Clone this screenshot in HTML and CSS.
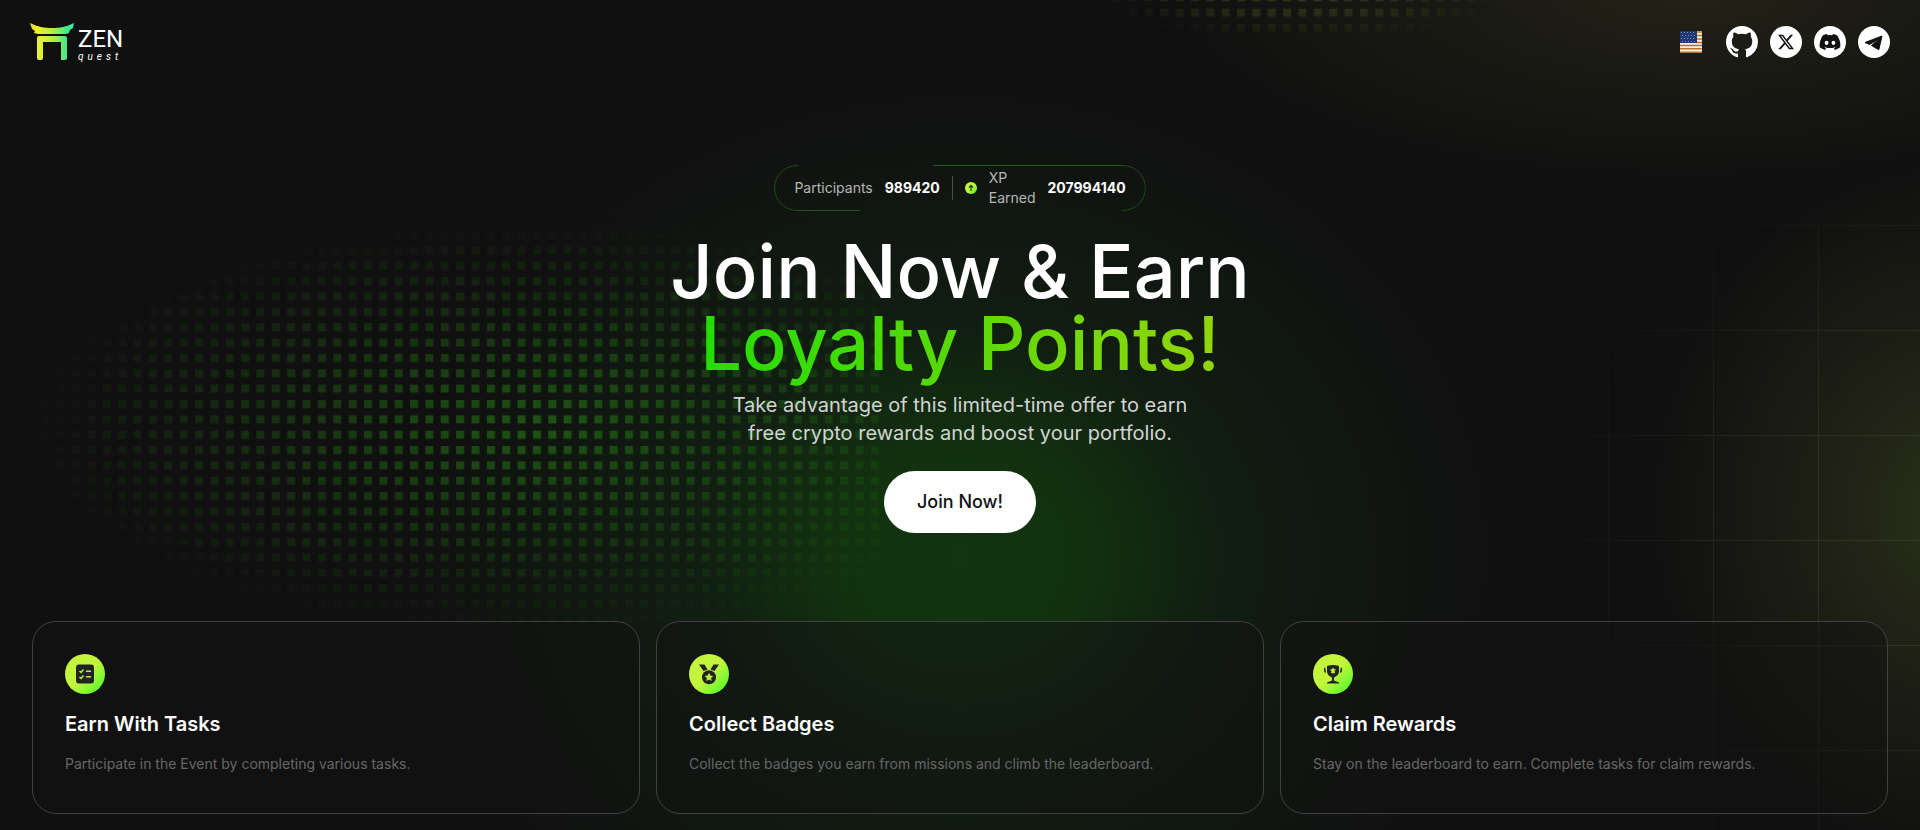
FILE: index.html
```html
<!DOCTYPE html>
<html lang="en">
<head>
<meta charset="utf-8">
<meta name="viewport" content="width=device-width, initial-scale=1">
<title>Zen Quest</title>
<link rel="stylesheet" href="styles.css">
</head>
<body>
<div class="backdrop" aria-hidden="true">
  <div class="glow"></div>
  <div class="grid-lines"></div>
  <svg class="dots-left" width="880" height="440" viewBox="0 0 880 440">
    <defs>
      <pattern id="dotL" width="15.36" height="15.36" patternUnits="userSpaceOnUse" x="10.7" y="0.3"><rect x="0" y="0" width="8" height="8" fill="#236e14"/></pattern>
      <radialGradient id="fadeL" gradientUnits="userSpaceOnUse" cx="0" cy="0" r="1" gradientTransform="translate(540 227) scale(520 210)">
        <stop offset="0" stop-color="#fff" stop-opacity=".72"/><stop offset="1" stop-color="#fff" stop-opacity="0"/>
      </radialGradient>
      <mask id="maskL"><rect width="880" height="440" fill="url(#fadeL)"/></mask>
    </defs>
    <rect width="880" height="440" fill="url(#dotL)" mask="url(#maskL)"/>
  </svg>
  <svg class="dots-top" width="480" height="40" viewBox="0 0 480 40">
    <defs>
      <pattern id="dotT" width="15.36" height="15.36" patternUnits="userSpaceOnUse" x="3.4" y="8.8"><rect x="0" y="0" width="8" height="8" fill="#50551c"/></pattern>
      <radialGradient id="fadeT" gradientUnits="userSpaceOnUse" cx="0" cy="0" r="1" gradientTransform="translate(220 -30) scale(236 72)">
        <stop offset="0" stop-color="#fff" stop-opacity=".9"/><stop offset="1" stop-color="#fff" stop-opacity="0"/>
      </radialGradient>
      <mask id="maskT"><rect width="480" height="40" fill="url(#fadeT)"/></mask>
    </defs>
    <rect width="480" height="40" fill="url(#dotT)" mask="url(#maskT)"/>
  </svg>
</div>

<header class="header">
  <a class="logo" href="#" aria-label="Zen Quest home">
    <svg width="44" height="40" viewBox="0 0 44 40" aria-hidden="true">
      <defs><linearGradient id="torii" x1="0" x2="1" y1="0" y2="0"><stop offset="0" stop-color="#fbd32a"/><stop offset=".15" stop-color="#eef22e"/><stop offset=".5" stop-color="#b9ee3e"/><stop offset=".85" stop-color="#3fe98c"/><stop offset="1" stop-color="#35e6a0"/></linearGradient></defs>
      <path fill="url(#torii)" d="M0 1C8 5 14 6 22 6S36 5 44 1L43 6 40 8 39 11 36 12H8L4 11 5 9 2 7ZM9 14H35Q37 14 37 16V36Q37 38 35 38H31V20H13V36Q13 38 11 38H9Q7 38 7 36V16Q7 14 9 14Z"/>
    </svg>
    <span class="wordmark"><span class="zen">ZEN</span><span class="quest">quest</span></span>
  </a>
  <nav class="links" aria-label="Language and community">
    <button class="flag" type="button" aria-label="English">
      <svg width="22" height="22" viewBox="0 0 22 22" aria-hidden="true">
        <path fill="#f5efe4" d="M0 0H22V22H0Z"/>
        <path stroke="#b5742a" stroke-width="1.500" d="M17 1H22M17 4.500H22M17 8H22M17 11.500H22M0 14.500H22M0 17.800H22M0 21.300H22"/>
        <path fill="#1f3673" d="M0 0H17V12H0Z"/>
        <path stroke="#8296c0" stroke-dasharray="1 2" d="M1 1.500H16M2 4.500H16M1 7.500H16M2 10.500H16"/>
      </svg>
    </button>
    <div class="social">
      <a href="#" aria-label="GitHub"><svg viewBox="0 0 16 16"><path fill="#fff" d="M8 0C3.580 0 0 3.580 0 8c0 3.540 2.290 6.530 5.470 7.590.4.070.55-.17.55-.38 0-.19-.01-.82-.01-1.490-2.010.370-2.530-.49-2.690-.94-.09-.23-.48-.94-.82-1.130-.28-.15-.68-.52-.01-.53.63-.01 1.080.58 1.230.82.72 1.210 1.870.87 2.330.66.070-.52.28-.87.51-1.070-1.780-.2-3.640-.89-3.640-3.950 0-.87.31-1.590.82-2.150-.08-.2-.36-1.020.08-2.120 0 0 .67-.21 2.200.82.64-.18 1.320-.27 2-.27s1.360.09 2 .27c1.530-1.040 2.200-.82 2.200-.82.44 1.100.16 1.920.08 2.120.51.56.82 1.270.82 2.150 0 3.070-1.870 3.750-3.650 3.950.29.25.54.73.54 1.480 0 1.070-.01 1.930-.01 2.200 0 .21.15.46.55.38A8.010 8.010 0 0 0 16 8c0-4.420-3.580-8-8-8"/></svg></a>
      <a href="#" aria-label="X"><svg viewBox="0 0 32 32"><circle cx="16" cy="16" r="16" fill="#fff"/><path fill="#111" transform="translate(8 8)" d="M12.600.75h2.454l-5.360 6.142L16 15.250h-4.937l-3.867-5.070-4.425 5.070H.316l5.733-6.570L0 .75h5.063l3.495 4.633L12.601.75Zm-.86 13.028h1.360L4.323 2.145H2.865z"/></svg></a>
      <a href="#" aria-label="Discord"><svg viewBox="0 0 32 32"><circle cx="16" cy="16" r="16" fill="#fff"/><path fill="#111" transform="translate(5.600 5.600) scale(1.300)" d="M13.545 2.907a13.200 13.200 0 0 0-3.257-1.011.05.05 0 0 0-.052.025c-.141.25-.297.577-.406.833a12.200 12.200 0 0 0-3.658 0 8 8 0 0 0-.412-.833.05.05 0 0 0-.052-.025c-1.125.194-2.220.534-3.257 1.011a.04.04 0 0 0-.021.018C.356 6.024-.213 9.047.066 12.032q.003.022.021.037a13.300 13.300 0 0 0 3.995 2.020.05.05 0 0 0 .056-.019q.463-.63.818-1.329a.05.05 0 0 0-.01-.059l-.018-.011a9 9 0 0 1-1.248-.595.05.05 0 0 1-.02-.066l.015-.019q.127-.095.248-.195a.05.05 0 0 1 .051-.007c2.619 1.196 5.454 1.196 8.041 0a.05.05 0 0 1 .053.007q.121.1.248.195a.05.05 0 0 1-.004.085 8 8 0 0 1-1.249.594.05.05 0 0 0-.03.03.05.05 0 0 0 .003.041c.24.465.515.909.817 1.329a.05.05 0 0 0 .056.019 13.200 13.200 0 0 0 4.001-2.020.05.05 0 0 0 .021-.037c.334-3.451-.559-6.449-2.366-9.106a.03.03 0 0 0-.02-.019m-8.198 7.307c-.789 0-1.438-.724-1.438-1.612s.637-1.613 1.438-1.613c.807 0 1.450.73 1.438 1.613 0 .888-.637 1.612-1.438 1.612m5.316 0c-.788 0-1.438-.724-1.438-1.612s.637-1.613 1.438-1.613c.807 0 1.451.73 1.438 1.613 0 .888-.631 1.612-1.438 1.612"/></svg></a>
      <a href="#" aria-label="Telegram"><svg viewBox="0 0 32 32"><circle cx="16" cy="16" r="16" fill="#fff"/><path fill="#111" stroke="#111" stroke-linejoin="round" d="M24 10 7 16.500 11.500 18.500 21.500 12.500 13.500 19.500 20.800 23.800Z"/></svg></a>
    </div>
  </nav>
</header>

<main class="main">
  <section class="hero">
    <div class="stats">
      <span class="stat-label">Participants</span>
      <strong>989420</strong>
      <span class="divider"></span>
      <svg width="12" height="12" viewBox="0 0 12 12" aria-hidden="true">
        <defs><linearGradient id="lime" x1="0" y1="0" x2="1" y2="1"><stop offset=".5" stop-color="#c3f53c"/><stop offset="1" stop-color="#3dfb2a"/></linearGradient></defs>
        <circle cx="6" cy="6" r="6" fill="url(#lime)"/><path d="M6 9V3.500M4 5.500 6 3.300 8 5.500" stroke="#1c3a10" stroke-width="1.200" fill="none"/>
      </svg>
      <span class="stat-label xp">XP Earned</span>
      <strong>207994140</strong>
    </div>
    <h1>Join Now &amp; Earn<br><span class="accent">Loyalty Points!</span></h1>
    <p class="lead">Take advantage of this limited-time offer to earn free crypto rewards and boost your portfolio.</p>
    <button class="join" type="button">Join Now!</button>
  </section>

  <section class="cards">
    <article class="card">
      <svg width="40" height="40" viewBox="0 0 40 40" aria-hidden="true">
        <circle cx="20" cy="20" r="20" fill="url(#lime)"/>
        <rect x="11" y="10.500" width="18" height="19" rx="3" fill="#222"/>
        <path d="M14.500 17 16 18.500 18.500 15.500M14.500 23 16 24.500 18.500 21.500M21 17.200H26M21 22.800H26" stroke="#b4f23a" stroke-width="1.500" fill="none"/>
      </svg>
      <h2>Earn With Tasks</h2>
      <p>Participate in the Event by completing various tasks.</p>
    </article>
    <article class="card">
      <svg width="40" height="40" viewBox="0 0 40 40" aria-hidden="true">
        <circle cx="20" cy="20" r="20" fill="url(#lime)"/>
        <path fill="#222" d="M10 10.500H15.500L18.500 15.500 14.500 17ZM30 10.500H24.500L21.500 15.500 25.500 17Z"/>
        <circle cx="20" cy="23.200" r="7" fill="#222"/>
        <path fill="#b4f23a" d="M20 18.800 21.300 21.600 24.300 22 22.100 24 22.600 27 20 25.600 17.400 27 17.900 24 15.700 22 18.700 21.600Z"/>
      </svg>
      <h2>Collect Badges</h2>
      <p>Collect the badges you earn from missions and climb the leaderboard.</p>
    </article>
    <article class="card">
      <svg width="40" height="40" viewBox="0 0 40 40" aria-hidden="true">
        <circle cx="20" cy="20" r="20" fill="url(#lime)"/>
        <path fill="#222" d="M14 12Q20 10 26 12V17Q26 21.500 21 23.500V26.500L26 28.500V29.500H14V28.500L19 26.500V23.500Q14 21.500 14 17Z"/>
        <path fill="none" stroke="#222" stroke-width="1.500" d="M12.300 14Q10.800 14.500 12.600 18.500M27.700 14Q29.200 14.500 27.400 18.500"/>
        <path fill="#b4f23a" d="M20 13.300 21 15.300 23.200 15.600 21.600 17.100 22 19.300H18L18.400 17.100 16.800 15.600 19 15.300Z"/>
      </svg>
      <h2>Claim Rewards</h2>
      <p>Stay on the leaderboard to earn. Complete tasks for claim rewards.</p>
    </article>
  </section>
</main>
</body>
</html>
```

FILE: styles.css
```css
* { box-sizing: border-box; }

body {
  margin: 0;
  min-height: 100vh;
  position: relative;
  overflow-x: hidden;
  background: #101010;
  color: #fff;
  font-family: Inter, "Liberation Sans", sans-serif;
}

.backdrop,
.glow {
  position: absolute;
  inset: 0;
  overflow: hidden;
}

.backdrop { z-index: -1; }

.glow {
  background:
    radial-gradient(310px 350px at calc(100% + 40px) 510px, #2b321a, rgba(38, 42, 24, .75) 35%, rgba(17, 17, 17, 0)),
    radial-gradient(520px 190px at 88% -10px, #222217, rgba(17, 17, 17, 0)),
    radial-gradient(540px 470px at 50% 555px, #12340e, #12320f 22%, rgba(17, 31, 18, .85) 50%, rgba(17, 17, 17, 0));
}

.grid-lines {
  position: absolute;
  top: 225px;
  right: 0;
  bottom: 0;
  width: 417px;
  background:
    repeating-linear-gradient(90deg, #43482a 0 1px, transparent 1px 105px),
    repeating-linear-gradient(#43482a 0 1px, transparent 1px 105px);
  mask-image: radial-gradient(390px 410px at 100% 315px, rgba(0, 0, 0, .7), transparent);
}

.dots-left {
  position: absolute;
  top: 200px;
  left: 0;
}

.dots-top {
  position: absolute;
  top: 0;
  left: 1080px;
}

.header {
  display: flex;
  align-items: center;
  justify-content: space-between;
  height: 84px;
  padding: 0 30px;
}

.logo {
  display: flex;
  align-items: center;
  gap: 4px;
  color: #fff;
  text-decoration: none;
}

.logo svg { display: block; }

.wordmark {
  display: flex;
  flex-direction: column;
  padding-top: 6px;
}

.zen {
  font: 400 24px/24px Roboto, sans-serif;
}

.quest {
  font: italic 400 10px/12px Roboto, sans-serif;
  letter-spacing: 4px;
}

.links {
  display: flex;
  align-items: center;
  gap: 24px;
}

.flag {
  padding: 0;
  border: 0;
  background: none;
  cursor: pointer;
}

.flag svg { display: block; }

.social {
  display: flex;
  gap: 12px;
}

.social svg {
  display: block;
  width: 32px;
  height: 32px;
}

.main { padding: 81px 32px 16px; }

.hero {
  display: flex;
  flex-direction: column;
  align-items: center;
  text-align: center;
}

.stats {
  position: relative;
  display: flex;
  align-items: center;
  gap: 12px;
  min-height: 46px;
  padding: 0 20px;
  font-size: 14px;
  line-height: 20px;
  text-align: left;
}

/* Outline with one break along the top edge and one along the bottom */
.stats::before {
  content: "";
  position: absolute;
  inset: 0;
  border: 1px solid #22591a;
  border-radius: 23px;
  mask:
    linear-gradient(90deg, #000 24px, transparent 24px 159px, #000 159px) top / 100% 50% no-repeat,
    linear-gradient(90deg, #000 86px, transparent 86px calc(100% - 24px), #000 calc(100% - 24px)) bottom / 100% 50% no-repeat;
}

.stat-label { color: #b5b8b5; }

.xp { width: min-content; }

.divider {
  width: 1px;
  height: 24px;
  background: #4c504c;
}

h1 {
  margin: 24px 0 12px;
  font-size: 74px;
  font-weight: 500;
  line-height: 72px;
}

.accent {
  background: linear-gradient(90deg, #22dd03, #93d50b);
  background-clip: text;
  color: transparent;
}

.lead {
  max-width: 480px;
  margin: 0 0 24px;
  color: #d2d4d2;
  font-size: 20px;
  line-height: 28px;
}

.join {
  height: 62px;
  padding: 0 33px;
  border: 0;
  border-radius: 31px;
  background: #fff;
  color: #111;
  font: 500 18px/28px Inter, "Liberation Sans", sans-serif;
  cursor: pointer;
}

.cards {
  display: grid;
  grid-template-columns: repeat(3, 1fr);
  gap: 16px;
  margin-top: 88px;
}

.card {
  padding: 32px 32px 39px;
  border: 1px solid #414141;
  border-radius: 24px;
  background: rgba(17, 17, 17, .5);
}

.card svg { display: block; }

.card h2 {
  margin: 16px 0;
  font-size: 20px;
  font-weight: 600;
  line-height: 28px;
}

.card p {
  margin: 0;
  color: #666867;
  font-size: 14px;
  line-height: 20px;
}
```
